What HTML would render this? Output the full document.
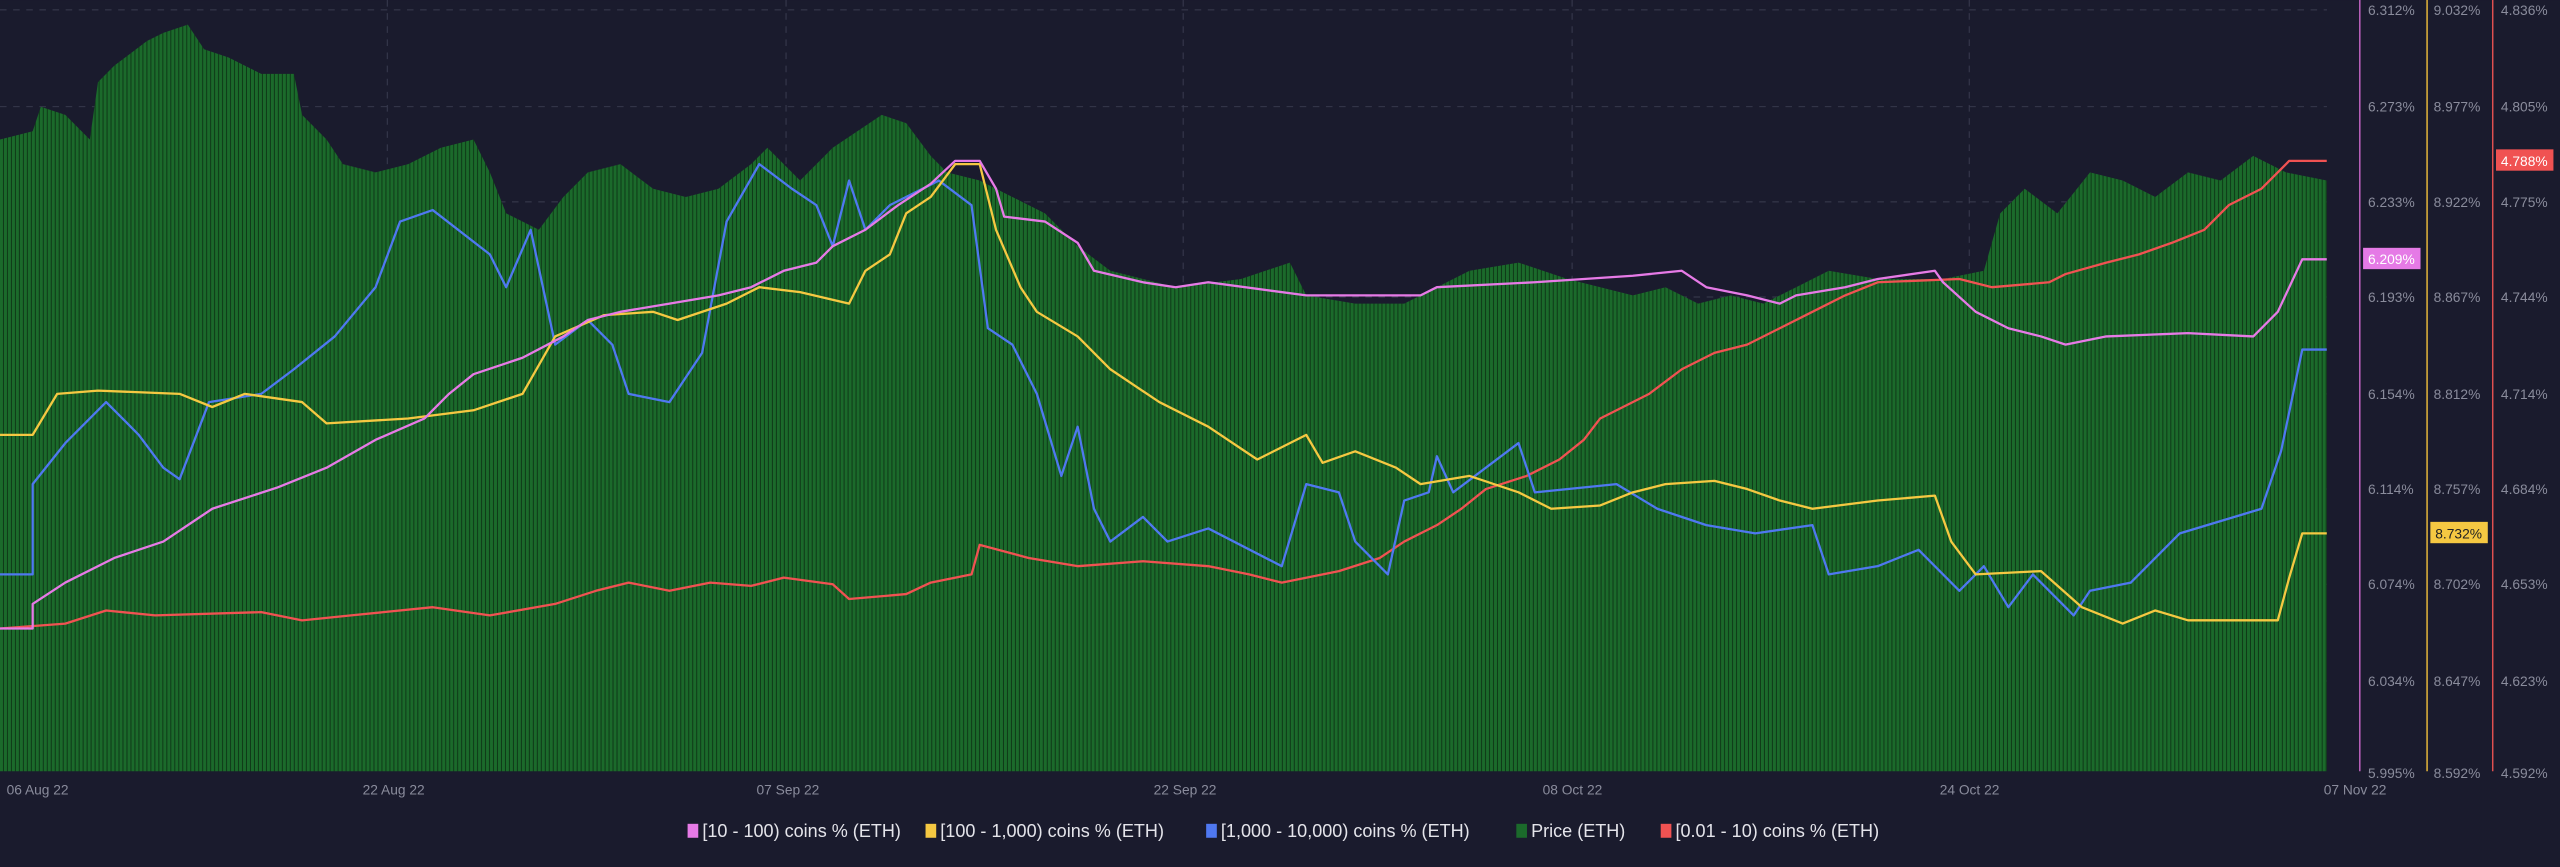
<!DOCTYPE html>
<html><head><meta charset="utf-8"><style>
html,body{margin:0;padding:0;background:#1a1b2d;overflow:hidden}
svg{display:block}
text{font-family:"Liberation Sans",sans-serif}
</style></head><body>
<svg width="2560" height="867" viewBox="0 0 1560 528.3" xmlns="http://www.w3.org/2000/svg">
<defs>
<pattern id="bars" patternUnits="userSpaceOnUse" width="2.44" height="10">
<rect width="2.44" height="10" fill="#0f3a18"/>
<rect width="1.8" height="10" fill="#1b6a2b"/>
</pattern>
</defs>
<rect width="1560" height="528.3" fill="#1a1b2d"/>
<g stroke="#3a3c50" stroke-width="0.6" stroke-dasharray="4 4">
<line x1="0" y1="6" x2="1418" y2="6"/><line x1="0" y1="65" x2="1418" y2="65"/><line x1="0" y1="123" x2="1418" y2="123"/><line x1="0" y1="181" x2="1418" y2="181"/><line x1="0" y1="240" x2="1418" y2="240"/><line x1="0" y1="298" x2="1418" y2="298"/><line x1="0" y1="356" x2="1418" y2="356"/><line x1="0" y1="415" x2="1418" y2="415"/>
<line x1="236" y1="0" x2="236" y2="470"/><line x1="479" y1="0" x2="479" y2="470"/><line x1="721" y1="0" x2="721" y2="470"/><line x1="958" y1="0" x2="958" y2="470"/><line x1="1200" y1="0" x2="1200" y2="470"/>
</g>
<g transform="scale(0.995,1)">
<polygon fill="url(#bars)" points="0,470 0,85 20,80 25,65 40,70 55,85 60,50 70,40 90,25 100,20 115,15 125,30 140,35 160,45 180,45 185,70 200,85 210,100 230,105 250,100 270,90 290,85 300,105 310,130 330,140 345,120 360,105 380,100 400,115 420,120 440,115 460,100 470,90 490,110 510,90 540,70 555,75 570,95 580,105 600,110 620,120 640,130 660,150 680,165 720,175 760,170 790,160 800,180 830,185 860,185 880,175 900,165 930,160 960,170 1000,180 1020,175 1040,185 1060,180 1080,185 1100,175 1120,165 1150,170 1190,170 1215,165 1225,130 1240,115 1260,130 1280,105 1300,110 1320,120 1340,105 1360,110 1380,95 1400,105 1425,110 1425,470"/>
<g fill="none" stroke-width="1.4" stroke-linejoin="round">
<polyline stroke="#f05252" points="0,383 40,380 65,372 95,375 160,373 185,378 215,375 265,370 300,375 340,368 365,360 385,355 410,360 435,355 460,357 480,352 510,356 520,365 555,362 570,355 595,350 600,332 630,340 660,345 700,342 740,345 765,350 785,355 820,348 845,340 860,330 880,320 895,310 910,298 935,290 955,280 970,268 980,255 1010,240 1030,225 1050,215 1070,210 1090,200 1110,190 1130,180 1150,172 1200,170 1220,175 1255,172 1265,167 1290,160 1310,155 1330,148 1350,140 1365,125 1385,115 1402,98 1425,98"/>
<polyline stroke="#4f78f0" points="0,350 20,350 20,295 40,270 65,245 85,265 100,285 110,292 128,245 160,240 180,225 205,205 230,175 245,135 265,128 300,155 310,175 325,140 340,210 360,195 375,210 385,240 410,245 430,215 445,135 465,100 485,115 500,125 510,150 520,110 530,140 545,125 575,110 595,125 605,200 620,210 635,240 650,290 660,260 670,310 680,330 700,315 715,330 740,322 785,345 800,295 820,300 830,330 850,350 860,305 875,300 880,278 890,300 930,270 940,300 990,295 1015,310 1045,320 1075,325 1110,320 1120,350 1150,345 1175,335 1200,360 1215,345 1230,370 1245,350 1270,375 1280,360 1305,355 1320,340 1335,325 1385,310 1397,275 1410,213 1425,213"/>
<polyline stroke="#f5c842" points="0,265 20,265 35,240 60,238 110,240 130,248 150,240 185,245 200,258 250,255 290,250 320,240 340,205 370,192 400,190 415,195 445,185 465,175 490,178 520,185 530,165 545,155 555,130 570,120 585,100 600,100 610,140 625,175 635,190 660,205 680,225 710,245 740,260 770,280 800,265 810,282 830,275 855,285 870,295 900,290 930,300 950,310 980,308 1000,300 1020,295 1050,293 1070,298 1090,305 1110,310 1150,305 1185,302 1195,330 1210,350 1250,348 1275,370 1300,380 1320,372 1340,378 1395,378 1402,352 1410,325 1425,325"/>
<polyline stroke="#e67ae6" points="0,383 20,383 20,368 40,355 70,340 100,330 130,310 170,297 200,285 230,268 260,255 275,240 290,228 320,218 345,205 360,195 380,190 410,185 440,180 460,175 480,165 500,160 510,150 530,140 550,125 570,112 585,98 600,98 610,115 615,132 640,135 660,148 670,165 700,172 720,175 740,172 800,180 870,180 880,175 940,172 1000,168 1030,165 1045,175 1070,180 1090,185 1100,180 1130,175 1150,170 1185,165 1190,172 1210,190 1230,200 1250,205 1265,210 1290,205 1340,203 1380,205 1395,190 1410,158 1425,158"/>
</g>
</g>
<line x1="1438" y1="0" x2="1438" y2="470" stroke="#c062c0" stroke-width="0.9"/>
<line x1="1479" y1="0" x2="1479" y2="470" stroke="#e8b83a" stroke-width="0.9"/>
<line x1="1519" y1="0" x2="1519" y2="470" stroke="#e05050" stroke-width="0.9"/>
<g fill="#8a8c9c" font-size="8.4">
<text x="1443" y="9">6.312%</text><text x="1443" y="68">6.273%</text><text x="1443" y="126">6.233%</text><text x="1443" y="184">6.193%</text><text x="1443" y="243">6.154%</text><text x="1443" y="301">6.114%</text><text x="1443" y="359">6.074%</text><text x="1443" y="418">6.034%</text><text x="1443" y="474">5.995%</text>
<text x="1483" y="9">9.032%</text><text x="1483" y="68">8.977%</text><text x="1483" y="126">8.922%</text><text x="1483" y="184">8.867%</text><text x="1483" y="243">8.812%</text><text x="1483" y="301">8.757%</text><text x="1483" y="359">8.702%</text><text x="1483" y="418">8.647%</text><text x="1483" y="474">8.592%</text>
<text x="1524" y="9">4.836%</text><text x="1524" y="68">4.805%</text><text x="1524" y="126">4.775%</text><text x="1524" y="184">4.744%</text><text x="1524" y="243">4.714%</text><text x="1524" y="301">4.684%</text><text x="1524" y="359">4.653%</text><text x="1524" y="418">4.623%</text><text x="1524" y="474">4.592%</text>
<text x="4" y="484">06 Aug 22</text><text x="221" y="484">22 Aug 22</text><text x="461" y="484">07 Sep 22</text><text x="703" y="484">22 Sep 22</text><text x="940" y="484">08 Oct 22</text><text x="1182" y="484">24 Oct 22</text><text x="1416" y="484">07 Nov 22</text>
</g>
<rect x="1440" y="151" width="35" height="13" fill="#e57ae6"/><text x="1443" y="161" font-size="8.4" fill="#fff">6.209%</text>
<rect x="1481" y="318" width="35" height="13" fill="#f5c842"/><text x="1484" y="328" font-size="8.4" fill="#222">8.732%</text>
<rect x="1521" y="91" width="35" height="13" fill="#f05252"/><text x="1524" y="101" font-size="8.4" fill="#fff">4.788%</text>
<g font-size="11" fill="#e4e4ea">
<rect x="419" y="502" width="6.5" height="8.5" fill="#e67ae6"/><text x="428" y="510">[10 - 100) coins % (ETH)</text>
<rect x="564" y="502" width="6.5" height="8.5" fill="#f5c842"/><text x="573" y="510">[100 - 1,000) coins % (ETH)</text>
<rect x="735" y="502" width="6.5" height="8.5" fill="#4f78f0"/><text x="744" y="510">[1,000 - 10,000) coins % (ETH)</text>
<rect x="924" y="502" width="6.5" height="8.5" fill="#1b6a2b"/><text x="933" y="510">Price (ETH)</text>
<rect x="1012" y="502" width="6.5" height="8.5" fill="#f05252"/><text x="1021" y="510">[0.01 - 10) coins % (ETH)</text>
</g>
</svg>
</body></html>
